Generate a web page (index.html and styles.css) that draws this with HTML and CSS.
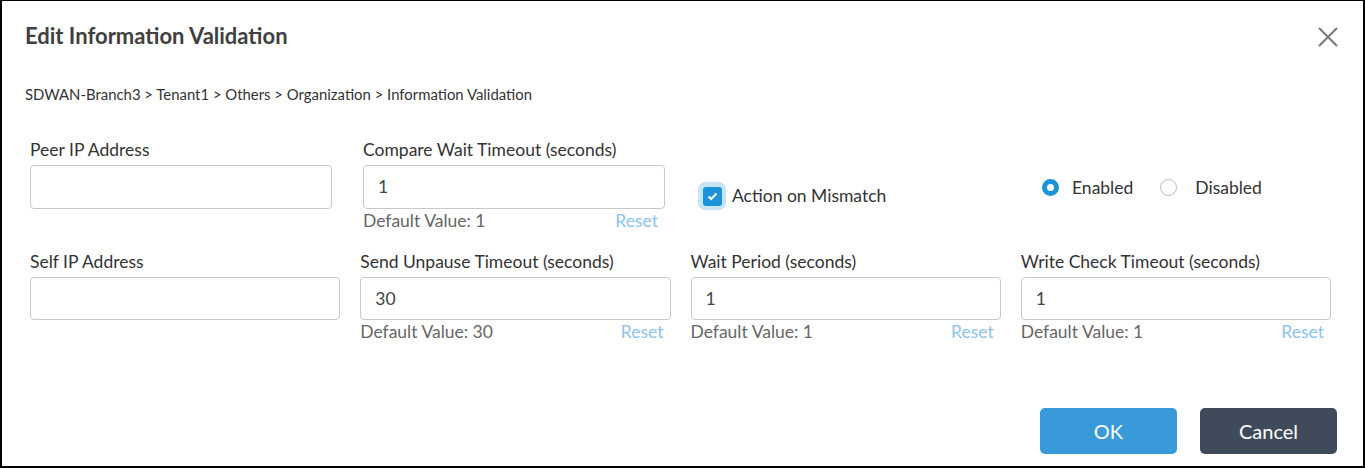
FILE: index.html
```html
<!DOCTYPE html>
<html>
<head>
    <title>Edit Information Validation</title>
    <link rel="stylesheet" href="styles.css">
</head>
<body>
<div class="dialog">
    <div class="header">
        <div class="title">Edit Information Validation</div>
        <svg class="close" width="22" height="22" viewBox="0 0 22 22">
            <path d="M2 2 L20 20 M20 2 L2 20" stroke="#777" stroke-width="2" fill="none"/>
        </svg>
    </div>

    <div class="breadcrumb">SDWAN-Branch3 &gt; Tenant1 &gt; Others &gt; Organization &gt; Information Validation</div>

    <div class="form">
        <div class="row row-top">
            <div class="field">
                <div class="label">Peer IP Address</div>
                <div class="input"></div>
            </div>
            <div class="field">
                <div class="label">Compare Wait Timeout (seconds)</div>
                <div class="input">1</div>
                <div class="hint"><span>Default Value: 1</span><span class="reset">Reset</span></div>
            </div>
            <div class="check-wrap">
                <span class="check-halo"><span class="check-box">
                    <svg width="11" height="9" viewBox="0 0 11 9"><path d="M1.5 4.5 L4.2 7 L9.5 1.5" stroke="#fff" stroke-width="2" fill="none"/></svg>
                </span></span>
                <span class="check-label">Action on Mismatch</span>
            </div>
            <div class="radio-wrap">
                <span class="radio on"></span><span class="radio-label">Enabled</span>
                <span class="radio"></span><span class="radio-label last">Disabled</span>
            </div>
        </div>

        <div class="row row-bottom">
            <div class="field">
                <div class="label">Self IP Address</div>
                <div class="input"></div>
            </div>
            <div class="field">
                <div class="label">Send Unpause Timeout (seconds)</div>
                <div class="input">30</div>
                <div class="hint"><span>Default Value: 30</span><span class="reset">Reset</span></div>
            </div>
            <div class="field">
                <div class="label">Wait Period (seconds)</div>
                <div class="input">1</div>
                <div class="hint"><span>Default Value: 1</span><span class="reset">Reset</span></div>
            </div>
            <div class="field">
                <div class="label">Write Check Timeout (seconds)</div>
                <div class="input">1</div>
                <div class="hint"><span>Default Value: 1</span><span class="reset">Reset</span></div>
            </div>
        </div>
    </div>

    <div class="footer">
        <button class="btn btn-ok">OK</button>
        <button class="btn btn-cancel">Cancel</button>
    </div>
</div>
</body>
</html>
```

FILE: styles.css
```css
/* base */
body {
    margin: 0;
    font-family: Lato, "Open Sans", sans-serif;
    color: #333;
    background: #fff;
}
.dialog {
    width: 1365px;
    height: 468px;
    box-sizing: border-box;
    border: 2px solid #000;
    border-top-width: 1px;
    padding: 0 26px 0 23px;
    display: flex;
    flex-direction: column;
}

/* header */
.header {
    display: flex;
    justify-content: space-between;
    align-items: center;
    padding-top: 22px;
}
.title {
    font-size: 22px;
    line-height: 25px;
    font-weight: bold;
    color: #404040;
}
.close {
    margin-right: -2px;
    margin-top: 2px;
}
.breadcrumb {
    margin-top: 38px;
    font-size: 14.9px;
    line-height: 17px;
    color: #333;
}

/* form */
.form {
    padding: 36px 6px 0 5px;
}
.row {
    display: grid;
    grid-template-columns: repeat(4, 1fr);
    height: 112px;
}
.row-top {
    column-gap: 31px;
}
.row-bottom {
    column-gap: 20px;
}
.label {
    padding-top: 1px;
    font-size: 17.5px;
    line-height: 19px;
    color: #333;
}
.input {
    margin-top: 6px;
    height: 44px;
    box-sizing: border-box;
    border: 1px solid #c8c8c8;
    border-radius: 4px;
    padding-left: 14px;
    font-size: 17.5px;
    line-height: 42px;
    color: #444;
}
.row-bottom .input {
    height: 43px;
    line-height: 41px;
}
.hint {
    margin-top: 2px;
    display: flex;
    justify-content: space-between;
    padding-right: 7px;
    font-size: 17.5px;
    line-height: 19px;
    color: #666;
}
.reset {
    color: #8dc3ef;
}

/* checkbox */
.check-wrap {
    display: flex;
    align-items: center;
    padding: 43px 0 0 2px;
    align-self: start;
}
.check-halo {
    width: 28px;
    height: 28px;
    border-radius: 7px;
    background: #c6e5f8;
    display: flex;
    align-items: center;
    justify-content: center;
}
.check-box {
    width: 19px;
    height: 19px;
    border-radius: 3px;
    background: #1b93d9;
    display: flex;
    align-items: center;
    justify-content: center;
}
.check-label {
    margin-left: 6px;
    font-size: 17.5px;
    margin-top: -1px;
}

/* radios */
.radio-wrap {
    display: flex;
    align-items: center;
    padding: 38px 0 0 13px;
    align-self: start;
    font-size: 17.5px;
}
.radio {
    width: 17px;
    height: 17px;
    box-sizing: border-box;
    border-radius: 50%;
    border: 1px solid #bbb;
}
.radio.on {
    border: 5px solid #1b93d9;
}
.radio-label {
    margin-left: 13px;
    margin-right: 27px;
}
.radio-label.last {
    margin-left: 18px;
}

/* footer */
.footer {
    margin-top: auto;
    display: flex;
    justify-content: flex-end;
    gap: 23px;
    padding-bottom: 12px;
}
.btn {
    width: 137px;
    height: 46px;
    border: none;
    border-radius: 5px;
    font-family: Lato, "Open Sans", sans-serif;
    font-size: 20px;
    color: #fff;
}
.btn-ok {
    background: #3a9ad9;
}
.btn-cancel {
    background: #3f4a5a;
}
```
